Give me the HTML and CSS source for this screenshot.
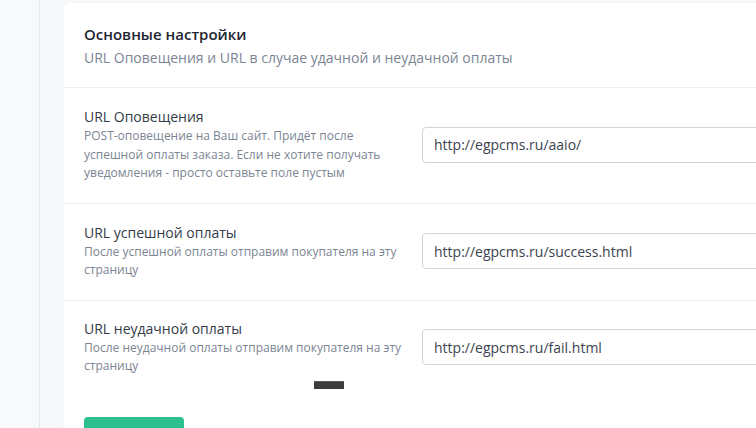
FILE: index.html
```html
<!DOCTYPE html>
<html lang="ru">
<head>
<meta charset="utf-8">
<title>Основные настройки</title>
<link rel="stylesheet" href="styles.css">
</head>
<body>
<div class="layout">
  <aside class="sidebar"></aside>
  <main class="content">
    <section class="card">
      <header class="card-head">
        <h2 class="card-title">Основные настройки</h2>
        <p class="card-sub">URL Оповещения и URL в случае удачной и неудачной оплаты</p>
      </header>
      <div class="row">
        <div class="info">
          <div class="label">URL Оповещения</div>
          <div class="desc">POST-оповещение на Ваш сайт. Придёт после успешной оплаты заказа. Если не хотите получать уведомления - просто оставьте поле пустым</div>
        </div>
        <input class="field" type="text" value="http://egpcms.ru/aaio/">
      </div>
      <div class="row">
        <div class="info">
          <div class="label">URL успешной оплаты</div>
          <div class="desc">После успешной оплаты отправим покупателя на эту страницу</div>
        </div>
        <input class="field" type="text" value="http://egpcms.ru/success.html">
      </div>
      <div class="row row-last">
        <div class="info">
          <div class="label">URL неудачной оплаты</div>
          <div class="desc">После неудачной оплаты отправим покупателя на эту страницу</div>
        </div>
        <input class="field" type="text" value="http://egpcms.ru/fail.html">
        <span class="marker"></span>
      </div>
      <div class="actions">
        <button class="btn" type="button">Сохранить</button>
      </div>
    </section>
  </main>
</div>
</body>
</html>
```
FILE: styles.css
```css
html, body {
  margin: 0;
  padding: 0;
  height: 100%;
  overflow: hidden;
}
body {
  font-family: "Open Sans", "Noto Sans", sans-serif;
  background: #f7f8fa;
  color: #3a4350;
}
.layout {
  display: flex;
  height: 428px;
  width: 900px;
}
.sidebar {
  width: 39px;
  flex: none;
  background: #f8f9fb;
  border-right: 1px solid #e3e6eb;
}
.content {
  flex: none;
  padding: 3px 0 0 24px;
}
.card {
  width: 820px;
  background: #fff;
  border-radius: 5px;
  box-shadow: 0 0 3px rgba(30, 40, 60, 0.04);
  min-height: 500px;
}
.card-head {
  padding: 20px 20px 18px;
  border-bottom: 1px solid #eef0f3;
}
.card-title {
  margin: 0;
  font-size: 15px;
  line-height: 22px;
  font-weight: 600;
  color: #1f2631;
}
.card-sub {
  margin: 2px 0 0;
  font-size: 14px;
  line-height: 22px;
  color: #7a8594;
}
.row {
  position: relative;
  display: grid;
  grid-template-columns: 318px 1fr;
  column-gap: 20px;
  align-items: center;
  padding: 19px 20px 20px;
  border-bottom: 1px solid #eef0f3;
}
.row-last {
  border-bottom: none;
  padding-top: 18px;
}
.label {
  font-size: 14px;
  line-height: 20px;
  color: #333c48;
}
.desc {
  font-size: 12px;
  line-height: 18.5px;
  color: #7b8593;
}
.field {
  box-sizing: border-box;
  height: 36px;
  width: 100%;
  border: 1px solid #cfd5dd;
  border-radius: 4px;
  padding: 0 11px;
  font-family: "Open Sans", "Noto Sans", sans-serif;
  font-size: 14px;
  color: #3a4350;
  background: #fff;
  outline: none;
}
.marker {
  position: absolute;
  left: 250px;
  top: 80px;
  width: 30px;
  height: 8px;
  background: #3c3c3c;
  border-top: 1px solid #5a5a5a;
  box-sizing: border-box;
}
.actions {
  padding: 21px 20px 20px;
}
.btn {
  width: 100px;
  height: 38px;
  border: none;
  border-radius: 4px;
  background: #2dbf8f;
  color: #fff;
  font-family: "Open Sans", "Noto Sans", sans-serif;
  font-size: 14px;
}
```
